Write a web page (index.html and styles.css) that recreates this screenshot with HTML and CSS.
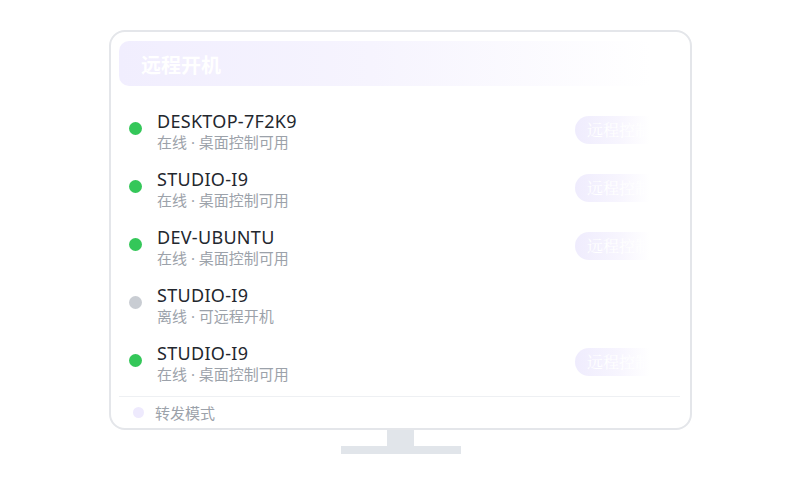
FILE: index.html
```html
<!DOCTYPE html>
<html lang="zh-CN">
<head>
<meta charset="utf-8">
<title>远程开机</title>
<link rel="stylesheet" href="styles.css">
</head>
<body>
<div class="scene">
  <div class="monitor">
    <div class="header"><span class="title">远程开机</span></div>
    <ul class="list">
      <li class="row">
        <span class="dot on"></span>
        <div class="info"><div class="name">DESKTOP-7F2K9</div><div class="sub">在线 · 桌面控制可用</div></div>
        <span class="btn">远程控制</span>
      </li>
      <li class="row">
        <span class="dot on"></span>
        <div class="info"><div class="name">STUDIO-I9</div><div class="sub">在线 · 桌面控制可用</div></div>
        <span class="btn">远程控制</span>
      </li>
      <li class="row">
        <span class="dot on"></span>
        <div class="info"><div class="name">DEV-UBUNTU</div><div class="sub">在线 · 桌面控制可用</div></div>
        <span class="btn">远程控制</span>
      </li>
      <li class="row">
        <span class="dot off"></span>
        <div class="info"><div class="name">STUDIO-I9</div><div class="sub">离线 · 可远程开机</div></div>
      </li>
      <li class="row">
        <span class="dot on"></span>
        <div class="info"><div class="name">STUDIO-I9</div><div class="sub">在线 · 桌面控制可用</div></div>
        <span class="btn">远程控制</span>
      </li>
    </ul>
    <div class="footer"><span class="fdot"></span><span class="ftext">转发模式</span></div>
  </div>
  <div class="neck"></div>
  <div class="base"></div>
</div>
</body>
</html>
```
FILE: styles.css
```css
html, body {
  margin: 0;
  padding: 0;
  background: #ffffff;
}
body {
  font-family: "Noto Sans", "Noto Sans CJK SC", sans-serif;
}
.scene {
  display: flex;
  flex-direction: column;
  align-items: center;
  padding-top: 30px;
  padding-left: 1px;
}
.monitor {
  box-sizing: border-box;
  width: 583px;
  height: 400px;
  border: 2px solid #e4e6ea;
  border-radius: 16px;
  padding: 9px 10px 0 8px;
  display: flex;
  flex-direction: column;
}
.header {
  height: 45px;
  border-radius: 10px;
  background: linear-gradient(90deg, #f1eefe 0%, #f6f4fe 45%, rgba(255,255,255,0) 95%);
  display: flex;
  align-items: center;
  padding-left: 22px;
}
.title {
  color: #ffffff;
  font-family: "Noto Sans CJK SC", sans-serif;
  font-weight: 700;
  font-size: 20px;
  padding-top: 1px;
}
.list {
  list-style: none;
  margin: 20px 0 0 0;
  padding: 0;
}
.row {
  height: 58px;
  display: flex;
  align-items: center;
}
.dot {
  width: 13px;
  height: 13px;
  border-radius: 50%;
  margin-left: 10px;
  margin-right: 15px;
  flex: none;
  align-self: flex-start;
  margin-top: 16px;
}
.dot.on { background: #34c759; }
.dot.off { background: #c9cdd3; }
.info {
  flex: 1;
  align-self: flex-start;
  padding-top: 4px;
}
.name {
  font-size: 18px;
  line-height: 22px;
  letter-spacing: 0.3px;
  color: #23272e;
}
.sub {
  font-family: "Noto Sans", "Noto Sans CJK SC", sans-serif;
  font-size: 15px;
  line-height: 20px;
  color: #9ca2aa;
}
.btn {
  font-family: "Noto Serif CJK SC", serif;
  font-size: 16px;
  color: #ffffff;
  height: 28px;
  line-height: 28px;
  padding: 0 12px;
  border-radius: 14px;
  margin-right: 17px;
  align-self: flex-start;
  margin-top: 10px;
  background: linear-gradient(90deg, #efecfd 0%, #f7f5fe 50%, #ffffff 85%);
}
.footer {
  border-top: 1px solid #eef0f3;
  flex: 1;
  display: flex;
  align-items: center;
  padding-left: 14px;
}
.fdot {
  width: 11px;
  height: 11px;
  border-radius: 50%;
  background: #eeeafd;
  margin-right: 11px;
}
.ftext {
  font-family: "Noto Sans CJK SC", sans-serif;
  font-size: 15px;
  color: #9ca2aa;
}
.neck {
  width: 27px;
  height: 16px;
  background: #e1e5ea;
}
.base {
  width: 120px;
  height: 8px;
  background: #e1e5ea;
}
```
